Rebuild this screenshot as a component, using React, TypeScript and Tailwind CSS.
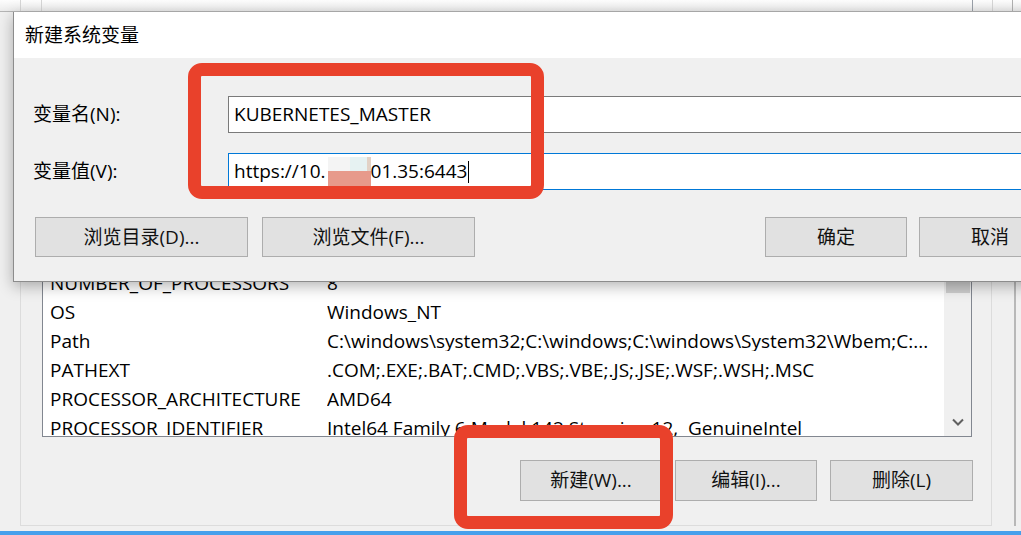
const rows = [
  { name: "ComSpec", value: "C:\\windows\\system32\\cmd.exe" },
  { name: "NUMBER_OF_PROCESSORS", value: "8" },
  { name: "OS", value: "Windows_NT" },
  { name: "Path", value: "C:\\windows\\system32;C:\\windows;C:\\windows\\System32\\Wbem;C:..." },
  { name: "PATHEXT", value: ".COM;.EXE;.BAT;.CMD;.VBS;.VBE;.JS;.JSE;.WSF;.WSH;.MSC" },
  { name: "PROCESSOR_ARCHITECTURE", value: "AMD64" },
  { name: "PROCESSOR_IDENTIFIER", value: "Intel64 Family 6 Model 142 Stepping 12,  GenuineIntel" },
]

function WinButton({ label, className }: { label: string; className: string }) {
  return (
    <div className={`shrink-0 flex items-center justify-center whitespace-nowrap bg-[#e1e1e1] border border-[#adadad] text-[#111] ${className}`}>
      {label}
    </div>
  )
}

export default function App() {
  return (
    <div className="relative w-[1021px] h-[535px] overflow-hidden bg-[#f0f0f0] text-[19px] text-black font-['Open_Sans','Noto_Sans_CJK_SC',sans-serif] leading-none">
      {/* background window */}
      <div className="flex flex-col h-full">
        <div className="flex h-[12px] bg-gradient-to-b from-[#fdfdfd] to-[#ececec] border-b border-[#b5b5b5]">
          <div className="w-[21px] border-r border-[#d5d5d5]" />
          <div className="w-[21px] border-r border-[#d5d5d5]" />
          <div className="flex-1" />
          <div className="w-[20px] border-l border-[#9aa0a8]" />
          <div className="w-[20px] border-l border-[#d5d5d5]" />
          <div className="w-[9px] border-l border-[#b0b0b0]" />
        </div>
        <div className="flex h-[514px]">
          <div className="w-[21px] border-r border-[#dcdcdc]" />
          <div className="w-[971px] border-b border-r border-[#dcdcdc] flex flex-col pl-[21px] pr-[18px]">
            <div className="mt-[228px] h-[197px] w-[930px] border border-[#828790] bg-white flex overflow-hidden">
              <div className="flex-1 flex flex-col -mt-px overflow-hidden">
                {rows.map((r) => (
                  <div key={r.name} className="flex items-center h-[29px] shrink-0 whitespace-nowrap">
                    <div className="w-[284px] shrink-0 pl-[7px]">{r.name}</div>
                    <div className="flex-1 overflow-hidden whitespace-pre">{r.value}</div>
                  </div>
                ))}
              </div>
              <div className="w-[27px] shrink-0 bg-[#f0f0f0] flex flex-col items-center justify-between">
                <div className="w-[24px] h-[52px] bg-[#cdcdcd]" />
                <svg width="12" height="8" viewBox="0 0 12 8" className="mb-[10px]">
                  <polyline points="1,1.5 6,6.5 11,1.5" fill="none" stroke="#606060" strokeWidth="2" />
                </svg>
              </div>
            </div>
            <div className="mt-[23px] flex justify-end gap-[13px]">
              <WinButton label="新建(W)..." className="w-[142px] h-[41px]" />
              <WinButton label="编辑(I)..." className="w-[142px] h-[41px]" />
              <WinButton label="删除(L)" className="w-[143px] h-[41px]" />
            </div>
          </div>
          <div className="flex-1 flex">
            <div className="w-[22px]" />
            <div className="w-[2px] bg-[#b8b8b8]" />
          </div>
        </div>
        <div className="h-[5px]" />
        <div className="h-[4px] bg-[#46a0ec]" />
      </div>

      {/* dialog window */}
      <div className="absolute left-[13px] top-[12px] w-[1080px] h-[270px] border-l border-b border-[#8c8c8c] bg-[#f0f0f0] shadow-[0_4px_14px_rgba(0,0,0,0.3)] flex flex-col">
        <div className="h-[46px] bg-white flex items-center pl-[11px]">新建系统变量</div>
        <div className="flex flex-col pl-[19px] pt-[38px]">
          <div className="flex items-center h-[37px]">
            <div className="w-[195px] shrink-0">变量名(N):</div>
            <div className="flex-1 h-full bg-white border border-[#7a7a7a] flex items-center pl-[5px]">KUBERNETES_MASTER</div>
          </div>
          <div className="flex items-center h-[37px] mt-[20px]">
            <div className="w-[195px] shrink-0">变量值(V):</div>
            <div className="flex-1 h-full bg-white border border-[#0078d7] flex items-center pl-[5px] whitespace-nowrap">
              <span>https://10.</span>
              <span className="w-[43px] h-[29px] ml-[2px] flex flex-col">
                <span className="flex h-[14px]">
                  <span className="w-[22px] bg-[#f4f4f4]" />
                  <span className="w-[17px] bg-[#e6f2f2]" />
                  <span className="w-[4px] bg-[#e2d2c6]" />
                </span>
                <span className="flex-1 bg-[#e79a8b]" />
              </span>
              <span>01.35:6443</span>
              <span className="w-px h-[22px] bg-black ml-[1px]" />
            </div>
          </div>
          <div className="flex mt-[27px] pl-[2px]">
            <WinButton label="浏览目录(D)..." className="w-[213px] h-[40px]" />
            <WinButton label="浏览文件(F)..." className="w-[213px] h-[40px] ml-[14px]" />
            <WinButton label="确定" className="w-[142px] h-[40px] ml-[290px]" />
            <WinButton label="取消" className="w-[142px] h-[40px] ml-[12px]" />
          </div>
        </div>
      </div>

      {/* red annotation boxes */}
      <div className="absolute left-[188px] top-[63px] w-[356px] h-[136px] border-[13px] border-[#e9412b] rounded-[14px]" />
      <div className="absolute left-[454px] top-[425px] w-[219px] h-[104px] border-[13px] border-[#e9412b] rounded-[14px]" />
    </div>
  )
}
